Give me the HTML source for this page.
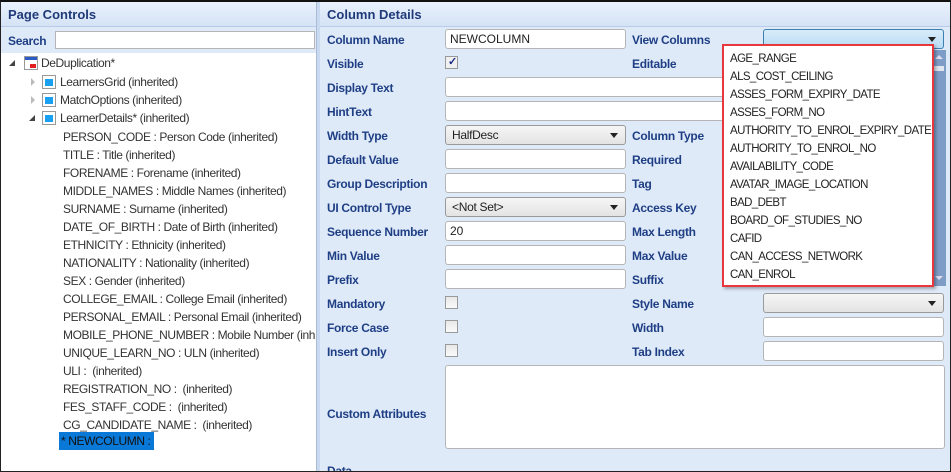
<!DOCTYPE html>
<html><head><meta charset="utf-8"><style>
*{box-sizing:border-box;margin:0;padding:0}
body{width:951px;height:472px;overflow:hidden;background:#fff;font-family:"Liberation Sans",sans-serif;font-size:12px;position:relative}
.a{position:absolute;white-space:nowrap}
#frame{position:absolute;left:0;top:0;width:951px;height:472px;border:1px solid #222;border-top:2px solid #111}
#left{position:absolute;left:1px;top:2px;width:315px;height:469px;background:#fff}
.hdr{position:absolute;height:25px;background:linear-gradient(#e9f1fc,#d5e3f6);border-bottom:1px solid #b9cbe6;color:#1f3a78;font-weight:bold;font-size:13px;padding:5px 0 0 7px}
#right{position:absolute;left:320px;top:2px;width:630px;height:469px;background:#dfeaf9;overflow:hidden}
#split{position:absolute;left:316px;top:2px;width:4px;height:469px;background:#c9d9ef;border-left:1px solid #aabbd6}
.t{color:#333;letter-spacing:-0.4px}
.l{color:#1f3f85;font-weight:bold;letter-spacing:-0.3px;font-size:12px}
.in{position:absolute;background:#fff;border:1px solid #b5b5b5;border-radius:3px;height:20px;width:181px}
.sel{position:absolute;background:linear-gradient(#f6f6f6,#e3e3e3);border:1px solid #9a9a9a;border-radius:3px;height:20px;width:181px;padding:2px 6px;color:#222;letter-spacing:-0.3px}
.sel:after{content:"";position:absolute;right:7px;top:7px;border:4px solid transparent;border-top:5px solid #222;border-bottom:0}
.cb{position:absolute;width:13px;height:13px;border:1px solid #999;background:linear-gradient(#e8e8e8,#fafafa);}
.ic{position:absolute;width:14px;height:14px;border:1px solid #999;background:#fff}
.ic i{position:absolute;left:2px;top:3px;width:8px;height:7px;background:#1aa0f0}
.tri{position:absolute;width:0;height:0}
</style></head><body>
<div id="left">
 <div class="hdr" style="left:0;top:0;width:315px">Page Controls</div>
 <div style="position:absolute;left:0;top:25px;width:315px;height:26px;background:#dfeaf9"></div>
 <div class="a l" style="left:7px;top:32px;font-size:12px">Search</div>
 <div style="position:absolute;left:54px;top:29px;width:260px;height:18px;background:#fff;border:1px solid #b5b5b5"></div>
 <div class="tri" style="left:8px;top:58px;border-left:6px solid transparent;border-bottom:6px solid #444"></div>
 <div style="position:absolute;left:23px;top:54px;width:14px;height:14px;border:1px solid #999;background:#fff"><div style="height:3px;background:#2a5cc4"></div><div style="position:absolute;right:1px;bottom:1px;width:6px;height:4px;background:#e02020"></div></div>
 <div class="a t" style="left:40px;top:54px">DeDuplication*</div>
 <div class="tri" style="left:30px;top:76px;border-top:4px solid transparent;border-bottom:4px solid transparent;border-left:4px solid #bbb"></div>
 <div class="ic" style="left:41px;top:73px"><i></i></div>
 <div class="a t" style="left:59px;top:73px">LearnersGrid (inherited)</div>
 <div class="tri" style="left:30px;top:94px;border-top:4px solid transparent;border-bottom:4px solid transparent;border-left:4px solid #bbb"></div>
 <div class="ic" style="left:41px;top:91px"><i></i></div>
 <div class="a t" style="left:59px;top:91px">MatchOptions (inherited)</div>
 <div class="tri" style="left:28px;top:113px;border-left:6px solid transparent;border-bottom:6px solid #444"></div>
 <div class="ic" style="left:41px;top:109px"><i></i></div>
 <div class="a t" style="left:59px;top:109px">LearnerDetails* (inherited)</div>
 <div class="a t" style="left:62px;top:126px;line-height:18px">PERSON_CODE : Person Code (inherited)<br>TITLE : Title (inherited)<br>FORENAME : Forename (inherited)<br>MIDDLE_NAMES : Middle Names (inherited)<br>SURNAME : Surname (inherited)<br>DATE_OF_BIRTH : Date of Birth (inherited)<br>ETHNICITY : Ethnicity (inherited)<br>NATIONALITY : Nationality (inherited)<br>SEX : Gender (inherited)<br>COLLEGE_EMAIL : College Email (inherited)<br>PERSONAL_EMAIL : Personal Email (inherited)<br>MOBILE_PHONE_NUMBER : Mobile Number (inh<br>UNIQUE_LEARN_NO : ULN (inherited)<br>ULI :&nbsp; (inherited)<br>REGISTRATION_NO :&nbsp; (inherited)<br>FES_STAFF_CODE :&nbsp; (inherited)<br>CG_CANDIDATE_NAME :&nbsp; (inherited)</div>
 <div class="a" style="left:58px;top:430px;width:95px;height:18px;background:#0a78d7;color:#111;padding:2px 0 0 2px;letter-spacing:-0.4px">* NEWCOLUMN :</div>
</div>
<div id="split"></div>
<div id="right">
 <div class="hdr" style="left:0;top:0;width:630px">Column Details</div>
 <div class="a l" style="left:7px;top:26px;line-height:24px">Column Name<br>Visible<br>Display Text<br>HintText<br>Width Type<br>Default Value<br>Group Description<br>UI Control Type<br>Sequence Number<br>Min Value<br>Prefix<br>Mandatory<br>Force Case<br>Insert Only</div>
 <div class="a l" style="left:7px;top:405px">Custom Attributes</div>
 <div class="a l" style="left:312px;top:26px;line-height:24px">View Columns<br>Editable<br><br><br>Column Type<br>Required<br>Tag<br>Access Key<br>Max Length<br>Max Value<br>Suffix<br>Style Name<br>Width<br>Tab Index</div>
 <div class="in" style="left:125px;top:27px;padding:2px 4px;color:#222">NEWCOLUMN</div>
 <div class="cb" style="left:125px;top:54px;background:#f0f0f0"><span style="position:absolute;left:2px;top:-2px;color:#1a2a8a;font-size:11px;font-weight:bold">✓</span></div>
 <div class="in" style="left:125px;top:75px;width:300px"></div>
 <div class="in" style="left:125px;top:99px;width:300px"></div>
 <div class="sel" style="left:125px;top:123px">HalfDesc</div>
 <div class="in" style="left:125px;top:147px"></div>
 <div class="in" style="left:125px;top:171px"></div>
 <div class="sel" style="left:125px;top:195px">&lt;Not Set&gt;</div>
 <div class="in" style="left:125px;top:219px;padding:2px 4px;color:#222">20</div>
 <div class="in" style="left:125px;top:243px"></div>
 <div class="in" style="left:125px;top:267px"></div>
 <div class="cb" style="left:125px;top:294px"></div>
 <div class="cb" style="left:125px;top:318px"></div>
 <div class="cb" style="left:125px;top:342px"></div>
 <div class="in" style="left:125px;top:363px;width:500px;height:84px"></div>
 <div class="a l" style="left:7px;top:462px">Data</div>
 <div class="sel" style="left:443px;top:27px;background:linear-gradient(#d8ecfa,#b9dcf4);border-color:#3c7fb1"></div>
 <div class="sel" style="left:443px;top:291px"></div>
 <div class="in" style="left:443px;top:315px"></div>
 <div class="in" style="left:443px;top:339px"></div>
 <div style="position:absolute;left:612px;top:48px;width:14px;height:236px;background:#7e9cc6"></div>
 <div class="tri" style="left:615px;top:53px;border-left:4px solid transparent;border-right:4px solid transparent;border-bottom:4px solid #dde"></div>
 <div style="position:absolute;left:614px;top:64px;width:10px;height:5px;background:#dfe6f0"></div>
 <div class="tri" style="left:615px;top:274px;border-left:4px solid transparent;border-right:4px solid transparent;border-top:4px solid #dde"></div>
 <div style="position:absolute;left:402px;top:42px;width:212px;height:243px;background:#fff;border:2px solid #e8383d;padding:4px 0 0 6px;line-height:18px;font-size:11.5px;color:#222;letter-spacing:-0.6px;box-shadow:2px 2px 3px rgba(0,0,0,.3);overflow:hidden">AGE_RANGE<br>ALS_COST_CEILING<br>ASSES_FORM_EXPIRY_DATE<br>ASSES_FORM_NO<br>AUTHORITY_TO_ENROL_EXPIRY_DATE<br>AUTHORITY_TO_ENROL_NO<br>AVAILABILITY_CODE<br>AVATAR_IMAGE_LOCATION<br>BAD_DEBT<br>BOARD_OF_STUDIES_NO<br>CAFID<br>CAN_ACCESS_NETWORK<br>CAN_ENROL</div>
</div>
<div id="frame"></div>
</body></html>
